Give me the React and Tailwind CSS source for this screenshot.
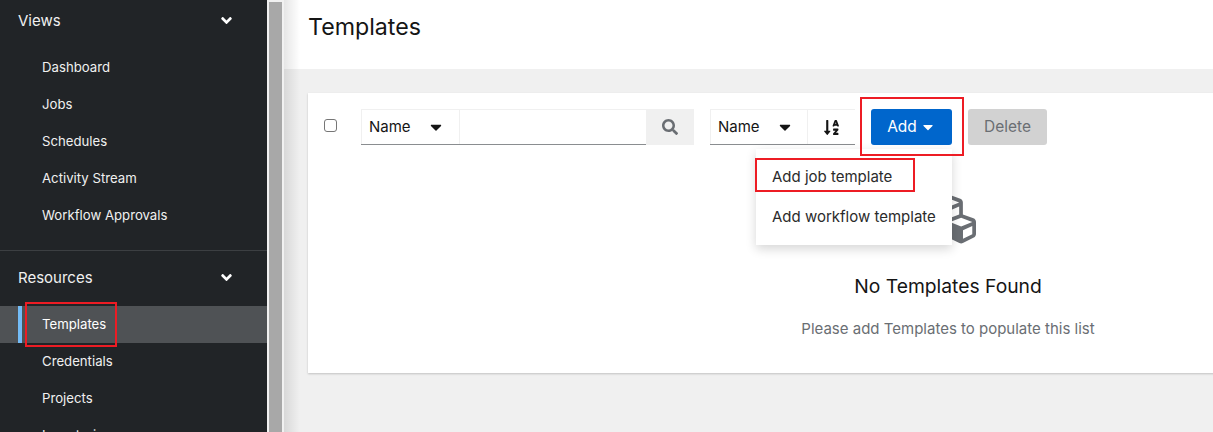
import { FaAngleDown, FaCaretDown, FaCubes, FaSearch, FaSortAlphaDown } from "react-icons/fa";

function NavItem({ label, active }) {
  return (
    <div className={`h-[37px] flex items-center relative pl-[42px] text-[13.2px] ${active ? "bg-[#4f5255] text-white" : "text-[#f0f0f0]"}`}>
      {active && <div className="absolute left-[18px] top-0 bottom-0 w-[4px] bg-[#73bcf7]" />}
      {label}
    </div>
  );
}

function NavGroup({ title, items, active }) {
  return (
    <div>
      <div className="h-[40px] pl-[18px] pr-[32px] flex items-center justify-between text-[15px] text-[#f0f0f0]">
        <span className="pt-[2px]">{title}</span>
        <FaAngleDown className="text-white w-[17px] h-[17px]" />
      </div>
      <div className="pt-[9px]">
        {items.map((item) => (
          <NavItem key={item} label={item} active={item === active} />
        ))}
      </div>
    </div>
  );
}

function Sidebar() {
  return (
    <div className="w-[267px] shrink-0 bg-[#212427]">
      <NavGroup title="Views" items={["Dashboard", "Jobs", "Schedules", "Activity Stream", "Workflow Approvals"]} />
      <div className="h-px bg-[#3c3f42] mt-[16px] mb-[6px]" />
      <NavGroup title="Resources" items={["Templates", "Credentials", "Projects", "Inventories"]} active="Templates" />
    </div>
  );
}

function Toolbar() {
  return (
    <div className="h-[72px] pt-[16px] flex items-start text-[15px] relative">
      <input type="checkbox" className="ml-[16px] mt-[10px] w-[13px] h-[13px] appearance-none border border-[#767676] rounded-[3px] bg-white" />
      <div className="ml-[24px] flex h-[36px] border-t border-t-[#f0f0f0] border-b border-b-[#8a8d90]">
        <div className="w-[98px] pl-[7px] pr-[14px] flex items-center justify-between border-l border-l-[#f0f0f0] text-[#151515]">
          Name
          <FaCaretDown className="w-[18px] h-[18px] text-[#151515]" />
        </div>
        <div className="w-[187px] border-l border-l-[#f0f0f0]" />
      </div>
      <div className="w-[48px] h-[36px] bg-[#f0f0f0] flex items-center justify-center">
        <FaSearch className="w-[16px] h-[16px] text-[#6a6e73]" />
      </div>
      <div className="ml-[16px] flex h-[36px] border-t border-t-[#f0f0f0] border-b border-b-[#8a8d90]">
        <div className="w-[97px] pl-[7px] pr-[13px] flex items-center justify-between border-l border-l-[#f0f0f0] text-[#151515]">
          Name
          <FaCaretDown className="w-[18px] h-[18px] text-[#151515]" />
        </div>
        <div className="w-[48px] flex items-center justify-center border-l border-l-[#f0f0f0]">
          <FaSortAlphaDown className="w-[17px] h-[17px] text-[#151515]" />
        </div>
      </div>
      <div className="ml-[16px] w-[81px] h-[36px] bg-[#0066cc] rounded-[3px] text-white flex items-center justify-center gap-[3px] text-[15.5px]">
        Add
        <FaCaretDown className="w-[16px] h-[16px]" />
      </div>
      <div className="ml-[16px] w-[79px] h-[36px] bg-[#d2d2d2] rounded-[3px] text-[#6a6e73] flex items-center justify-center text-[15.5px]">
        Delete
      </div>
      <div className="absolute left-[448px] top-[56px] w-[196px] h-[96px] bg-white shadow-[0_4px_10px_rgba(3,3,3,0.16)] z-10 pt-[8px] text-[15px] text-[#2b2b2b]">
        <div className="h-[40px] pl-[16px] flex items-center">Add job template</div>
        <div className="h-[40px] pl-[16px] flex items-center">Add workflow template</div>
      </div>
    </div>
  );
}

function EmptyState() {
  return (
    <div className="flex flex-col items-center h-[208px]">
      <FaCubes className="w-[56px] h-[56px] text-[#6a6e73] mt-[26px]" />
      <div className="mt-[25px] text-[19.3px] text-[#151515]">No Templates Found</div>
      <div className="mt-[17px] text-[15px] text-[#6a6e73]">Please add Templates to populate this list</div>
    </div>
  );
}

export default function App() {
  return (
    <div className="flex h-[432px] w-[1213px] overflow-hidden font-['Inter',sans-serif] relative">
      <Sidebar />
      <div className="w-[17px] shrink-0 bg-[#f1f1f1] px-[2px] pt-[2px]">
        <div className="bg-[#a8a8a8] h-full" />
      </div>
      <div className="flex-1 min-w-0 overflow-hidden bg-[#f0f0f0] relative">
        <div className="absolute left-0 top-0 bottom-0 w-[16px] bg-gradient-to-r from-black/10 to-transparent z-10" />
        <div className="h-[69px] bg-white pl-[24px] pt-[10px] text-[23.2px] text-[#151515]">Templates</div>
        <div className="ml-[24px] mt-[24px] w-[1280px] h-[280px] bg-white shadow-[0_1px_2px_rgba(3,3,3,0.2)]">
          <Toolbar />
          <EmptyState />
        </div>
      </div>
      <div className="absolute left-[25px] top-[302px] w-[92px] h-[45px] border-2 border-[#ed1c24] z-20" />
      <div className="absolute left-[860px] top-[97px] w-[104px] h-[59px] border-2 border-[#ed1c24] z-20" />
      <div className="absolute left-[755px] top-[158px] w-[160px] h-[34px] border-2 border-[#ed1c24] z-20" />
    </div>
  );
}
